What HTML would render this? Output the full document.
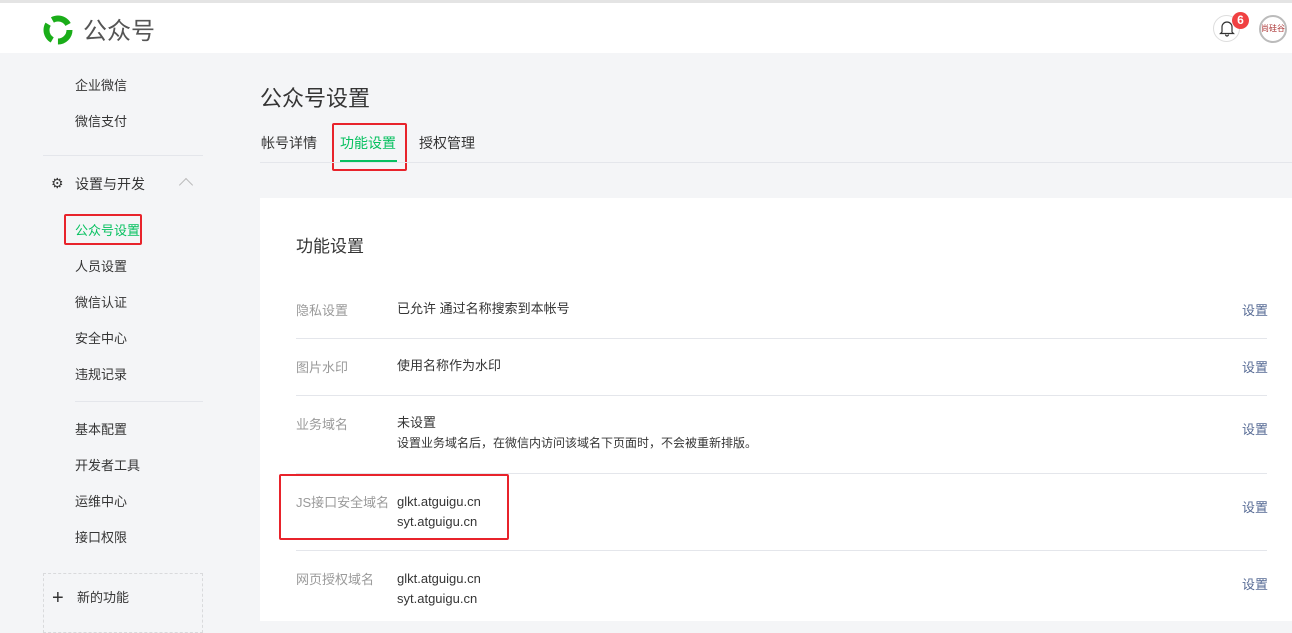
<!DOCTYPE html>
<html><head><meta charset="utf-8"><style>
*{margin:0;padding:0;box-sizing:border-box}
body{width:1292px;height:621px;overflow:hidden;background:#f4f5f7;font-family:"Liberation Sans","Noto Sans CJK SC",sans-serif;position:relative;font-size:14px;color:#353535}
.hdr{position:absolute;left:0;top:0;width:1292px;height:53px;background:#fff;border-top:3px solid #e4e4e4}
.a{position:absolute;white-space:nowrap}
.nav{font-size:13px;color:#353535}
.line{position:absolute;height:1px;background:#e4e6eb}
.red{position:absolute;border:2px solid #e8232b;border-radius:2px}
.card{position:absolute;left:260px;top:198px;width:1032px;height:423px;background:#fff}
.lbl{color:#9a9a9a;font-size:13px}
.val{font-size:13px;color:#353535;line-height:20px}
.set{color:#576b95;font-size:13px}
</style></head><body>
<div class="hdr"></div>
<svg class="a" style="left:42px;top:14px" width="32" height="32" viewBox="0 0 32 32"><circle cx="16" cy="16" r="11.5" fill="none" stroke="#1aad19" stroke-width="6" stroke-dasharray="18 6"/></svg>
<div class="a" style="left:83px;top:11px;font-size:24px;color:#555">公众号</div>
<div class="a" style="left:1213px;top:15px;width:27px;height:27px;border:1px solid #ddd;border-radius:50%"></div>
<svg class="a" style="left:1219px;top:20px" width="16" height="17" viewBox="0 0 16 17"><path d="M3 12V7a5 5 0 0 1 10 0v5l1.5 1.5h-13z M6.5 14.5a1.5 1.5 0 0 0 3 0" fill="none" stroke="#333" stroke-width="1.2"/></svg>
<div class="a" style="left:1232px;top:12px;width:17px;height:17px;border-radius:50%;background:#f04142;color:#fff;font-size:12px;text-align:center;line-height:17px;font-weight:bold">6</div>
<div class="a" style="left:1259px;top:15px;width:28px;height:28px;border-radius:50%;border:2px solid #bbb;font-size:8px;color:#a33;text-align:center;line-height:24px">尚硅谷</div>
<div class="a nav" style="left:75px;top:75px">企业微信</div>
<div class="a nav" style="left:75px;top:111px">微信支付</div>
<div class="line" style="left:43px;top:155px;width:160px"></div>
<div class="a" style="left:51px;top:175px;font-size:14px;color:#353535">⚙</div>
<div class="a nav" style="left:75px;top:174px;font-size:14px">设置与开发</div>
<div class="a" style="left:181px;top:180px;width:10px;height:10px;border-left:1px solid #bbb;border-top:1px solid #bbb;transform:rotate(45deg)"></div>
<div class="a nav" style="left:75px;top:220px;color:#07c160">公众号设置</div>
<div class="red" style="left:64px;top:214px;width:78px;height:31px"></div>
<div class="a nav" style="left:75px;top:256px">人员设置</div>
<div class="a nav" style="left:75px;top:292px">微信认证</div>
<div class="a nav" style="left:75px;top:328px">安全中心</div>
<div class="a nav" style="left:75px;top:364px">违规记录</div>
<div class="line" style="left:75px;top:401px;width:128px"></div>
<div class="a nav" style="left:75px;top:419px">基本配置</div>
<div class="a nav" style="left:75px;top:455px">开发者工具</div>
<div class="a nav" style="left:75px;top:491px">运维中心</div>
<div class="a nav" style="left:75px;top:527px">接口权限</div>
<div class="a" style="left:43px;top:573px;width:160px;height:60px;border:1px dashed #d9dadc"></div>
<div class="a" style="left:52px;top:588px;font-size:20px;color:#333;line-height:20px">+</div>
<div class="a nav" style="left:77px;top:587px">新的功能</div>
<div class="a" style="left:260px;top:81px;font-size:22px;color:#353535">公众号设置</div>
<div class="a" style="left:261px;top:133px;font-size:14px">帐号详情</div>
<div class="a" style="left:340px;top:133px;font-size:14px;color:#07c160">功能设置</div>
<div class="a" style="left:340px;top:160px;width:57px;height:2px;background:#07c160"></div>
<div class="red" style="left:332px;top:123px;width:75px;height:48px"></div>
<div class="a" style="left:419px;top:133px;font-size:14px">授权管理</div>
<div class="line" style="left:260px;top:162px;width:1032px"></div>
<div class="card"></div>
<div class="a" style="left:296px;top:232px;font-size:17px">功能设置</div>
<div class="a lbl" style="left:296px;top:300px">隐私设置</div><div class="a val" style="left:397px;top:299px">已允许 通过名称搜索到本帐号</div><div class="a set" style="left:1242px;top:300px">设置</div>
<div class="line" style="left:296px;top:338px;width:971px"></div>
<div class="a lbl" style="left:296px;top:357px">图片水印</div><div class="a val" style="left:397px;top:356px">使用名称作为水印</div><div class="a set" style="left:1242px;top:357px">设置</div>
<div class="line" style="left:296px;top:395px;width:971px"></div>
<div class="a lbl" style="left:296px;top:414px">业务域名</div><div class="a val" style="left:397px;top:413px">未设置<br><span style="font-size:12px">设置业务域名后，在微信内访问该域名下页面时，不会被重新排版。</span></div><div class="a set" style="left:1242px;top:419px">设置</div>
<div class="line" style="left:296px;top:473px;width:971px"></div>
<div class="a lbl" style="left:296px;top:492px">JS接口安全域名</div><div class="a val" style="left:397px;top:492px">glkt.atguigu.cn<br>syt.atguigu.cn</div><div class="a set" style="left:1242px;top:497px">设置</div>
<div class="red" style="left:279px;top:474px;width:230px;height:66px"></div>
<div class="line" style="left:296px;top:550px;width:971px"></div>
<div class="a lbl" style="left:296px;top:569px">网页授权域名</div><div class="a val" style="left:397px;top:569px">glkt.atguigu.cn<br>syt.atguigu.cn</div><div class="a set" style="left:1242px;top:574px">设置</div>
</body></html>
